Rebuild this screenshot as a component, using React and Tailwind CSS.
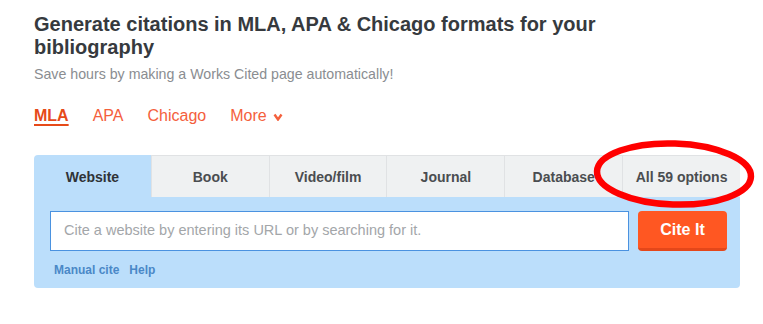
import React from "react";

const tabs = ["Website", "Book", "Video/film", "Journal", "Database", "All 59 options"];

export default function App() {
  return (
    <div className="relative w-[763px] h-[324px] bg-white overflow-hidden" style={{ fontFamily: '"Liberation Sans", Arial, sans-serif' }}>
      <div className="pl-[34px] pt-[13px] w-[740px]">
        <h1 className="text-[20px] leading-[23px] font-bold text-[#363a3e] w-[620px]">
          Generate citations in MLA, APA &amp; Chicago formats for your bibliography
        </h1>
        <p className="mt-[5px] text-[14.2px] leading-[20px] text-[#8a8d91]">
          Save hours by making a Works Cited page automatically!
        </p>
        <div className="mt-[22px] flex items-center gap-6 text-[16px] leading-[20px] text-[#f4603c]">
          <span className="font-bold text-[#e64a19] underline decoration-2 underline-offset-[3px]">MLA</span>
          <span>APA</span>
          <span>Chicago</span>
          <span className="flex items-center gap-[6px]">
            More
            <svg width="10" height="8" viewBox="0 0 10 8" className="mt-[1px]">
              <path d="M1.5 1.5 L5 6.5 L8.5 1.5" fill="none" stroke="#f4603c" strokeWidth="2.4" />
            </svg>
          </span>
        </div>
        <div className="mt-[29px] w-[706px] bg-[#bbdefb] rounded-[4px] overflow-hidden">
          <div className="flex h-[42px]">
            {tabs.map((t, i) => (
              <div
                key={t}
                className={
                  i === 0
                    ? "flex-1 flex items-center justify-center pt-[2px] text-[14px] font-bold text-[#2f3337]"
                    : "flex-1 flex items-center justify-center pt-[2px] text-[14px] font-bold text-[#4a4d50] bg-[#eff1f2] border-t border-[#e0e2e4] border-l"
                }
              >
                {t}
              </div>
            ))}
          </div>
          <div className="pl-[16px] pr-[13px] pt-[14px] pb-[11px]">
            <div className="flex gap-[9px]">
              <div className="flex-1 h-[40px] bg-white border border-[#4a92e0] flex items-center pl-[13px] text-[14.5px] text-[#a3a6a9]">
                Cite a website by entering its URL or by searching for it.
              </div>
              <button className="w-[89px] h-[40px] rounded-[4px] bg-[#ff5722] border-b-[3px] border-[#e4471a] text-white font-bold text-[16px]">
                Cite It
              </button>
            </div>
            <div className="mt-[12px] pl-[4px] flex gap-[10px] text-[12px] leading-[14px] font-bold text-[#4a88c7]">
              <span>Manual cite</span>
              <span>Help</span>
            </div>
          </div>
        </div>
      </div>
      <svg className="absolute left-0 top-0 pointer-events-none" width="763" height="324">
        <ellipse cx="674" cy="174" rx="77" ry="30.5" fill="none" stroke="#ff0000" strokeWidth="6.5" transform="rotate(2 674 174)" />
      </svg>
    </div>
  );
}
